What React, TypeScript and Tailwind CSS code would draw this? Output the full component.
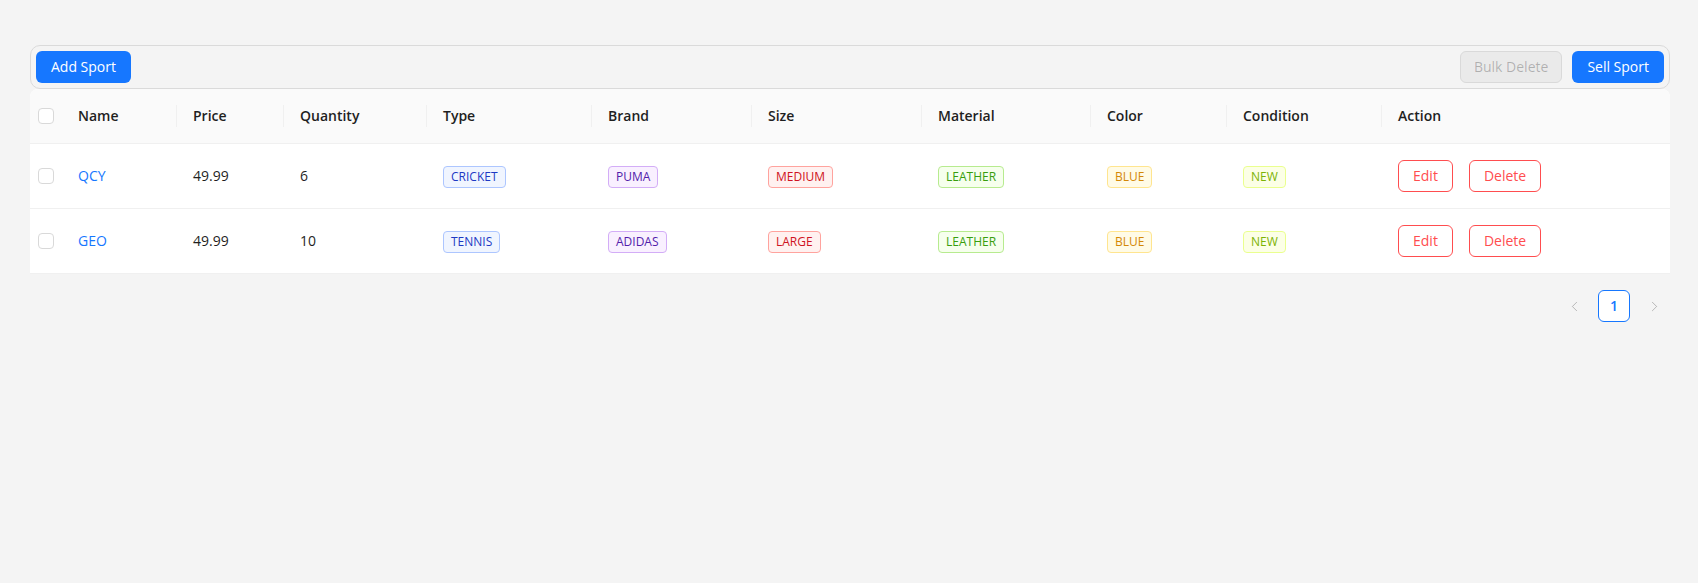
import { ChevronLeft, ChevronRight } from 'lucide-react';

interface Sport {
  id: number;
  name: string;
  price: string;
  quantity: number;
  type: string;
  brand: string;
  size: string;
  material: string;
  color: string;
  condition: string;
}

const sports: Sport[] = [
  { id: 1, name: 'QCY', price: '49.99', quantity: 6, type: 'CRICKET', brand: 'PUMA', size: 'MEDIUM', material: 'LEATHER', color: 'BLUE', condition: 'NEW' },
  { id: 2, name: 'GEO', price: '49.99', quantity: 10, type: 'TENNIS', brand: 'ADIDAS', size: 'LARGE', material: 'LEATHER', color: 'BLUE', condition: 'NEW' },
];

const columns = [
  { title: 'Name', width: 'w-[115px]' },
  { title: 'Price', width: 'w-[107px]' },
  { title: 'Quantity', width: 'w-[143px]' },
  { title: 'Type', width: 'w-[165px]' },
  { title: 'Brand', width: 'w-[160px]' },
  { title: 'Size', width: 'w-[170px]' },
  { title: 'Material', width: 'w-[169px]' },
  { title: 'Color', width: 'w-[136px]' },
  { title: 'Condition', width: 'w-[155px]' },
  { title: 'Action', width: '' },
];

const tagStyles = {
  geekblue: 'bg-[#f0f5ff] border-[#adc6ff] text-[#1d39c4]',
  purple: 'bg-[#f9f0ff] border-[#d3adf7] text-[#531dab]',
  red: 'bg-[#fff1f0] border-[#ffa39e] text-[#cf1322]',
  green: 'bg-[#f6ffed] border-[#b7eb8f] text-[#389e0d]',
  gold: 'bg-[#fffbe6] border-[#ffe58f] text-[#d48806]',
  lime: 'bg-[#fcffe6] border-[#eaff8f] text-[#7cb305]',
};

function Tag({ color, children }: { color: keyof typeof tagStyles; children: React.ReactNode }) {
  return (
    <span className={`inline-block border rounded px-[7px] text-xs leading-5 ${tagStyles[color]}`}>
      {children}
    </span>
  );
}

function Checkbox() {
  return <span className="block w-4 h-4 mx-auto rounded border border-[#d9d9d9] bg-white" />;
}

export default function App() {
  return (
    <div
      className="min-h-[583px] bg-[#f4f4f4] pl-[30px] pr-[28px] pt-[45px] text-sm leading-[22px] text-[#1f1f1f]"
      style={{ fontFamily: '"Open Sans", "Noto Sans", sans-serif' }}
    >
      <div className="flex items-center justify-between h-[44px] px-[5px] border border-[#dadada] rounded-[10px] bg-[#f4f4f4]">
        <button className="h-8 px-[15px] rounded-md bg-[#1677ff] text-white">Add Sport</button>
        <div className="flex gap-[10px]">
          <button className="h-8 px-[13px] rounded-md border border-[#d9d9d9] bg-black/[0.04] text-black/25">
            Bulk Delete
          </button>
          <button className="h-8 px-[15px] rounded-md bg-[#1677ff] text-white">Sell Sport</button>
        </div>
      </div>

      <div className="bg-white rounded-t-lg overflow-hidden">
        <table className="w-full table-fixed border-separate border-spacing-0">
          <thead>
            <tr className="bg-[#fafafa]">
              <th className="w-8 h-[55px] border-b border-[#f0f0f0]">
                <Checkbox />
              </th>
              {columns.map((col, i) => (
                <th
                  key={col.title}
                  className={`${col.width} relative px-4 text-left font-semibold border-b border-[#f0f0f0]`}
                >
                  {col.title}
                  {i < columns.length - 1 && (
                    <span className="absolute right-0 top-1/2 -translate-y-1/2 h-[22px] w-px bg-[#f0f0f0]" />
                  )}
                </th>
              ))}
            </tr>
          </thead>
          <tbody>
            {sports.map((s) => (
              <tr key={s.id}>
                <td className="h-[65px] border-b border-[#f0f0f0]">
                  <Checkbox />
                </td>
                <td className="px-4 border-b border-[#f0f0f0] text-[#1677ff]">{s.name}</td>
                <td className="px-4 border-b border-[#f0f0f0]">{s.price}</td>
                <td className="px-4 border-b border-[#f0f0f0]">{s.quantity}</td>
                <td className="px-4 border-b border-[#f0f0f0]"><Tag color="geekblue">{s.type}</Tag></td>
                <td className="px-4 border-b border-[#f0f0f0]"><Tag color="purple">{s.brand}</Tag></td>
                <td className="px-4 border-b border-[#f0f0f0]"><Tag color="red">{s.size}</Tag></td>
                <td className="px-4 border-b border-[#f0f0f0]"><Tag color="green">{s.material}</Tag></td>
                <td className="px-4 border-b border-[#f0f0f0]"><Tag color="gold">{s.color}</Tag></td>
                <td className="px-4 border-b border-[#f0f0f0]"><Tag color="lime">{s.condition}</Tag></td>
                <td className="px-4 border-b border-[#f0f0f0]">
                  <div className="flex gap-4">
                    <button className="h-8 px-[14px] rounded-md border border-[#ff4d4f] bg-white text-[#ff4d4f]">Edit</button>
                    <button className="h-8 px-[14px] rounded-md border border-[#ff4d4f] bg-white text-[#ff4d4f]">Delete</button>
                  </div>
                </td>
              </tr>
            ))}
          </tbody>
        </table>
      </div>

      <div className="flex justify-end gap-2 mt-4">
        <span className="w-8 h-8 flex items-center justify-center text-black/25">
          <ChevronLeft size={17} strokeWidth={1.4} />
        </span>
        <span className="w-8 h-8 flex items-center justify-center rounded-md border border-[#1677ff] bg-white text-[#1677ff] font-semibold">
          1
        </span>
        <span className="w-8 h-8 flex items-center justify-center text-black/25">
          <ChevronRight size={17} strokeWidth={1.4} />
        </span>
      </div>
    </div>
  );
}
